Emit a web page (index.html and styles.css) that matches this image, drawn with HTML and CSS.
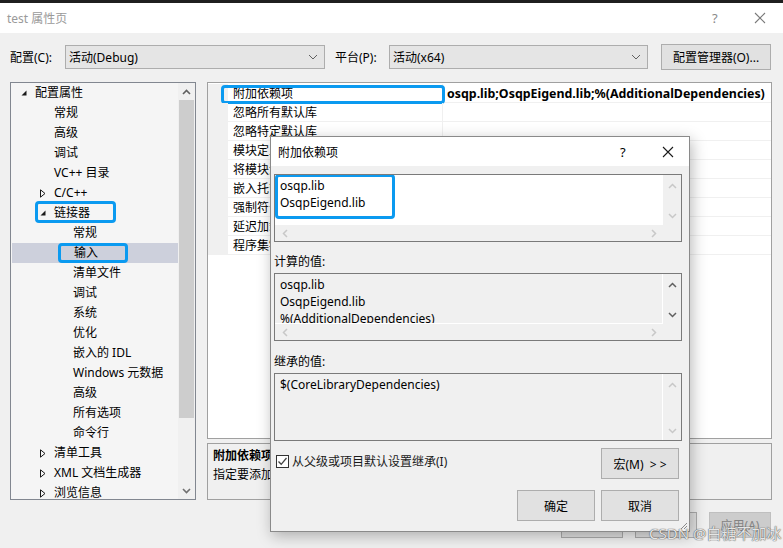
FILE: index.html
```html
<!DOCTYPE html>
<html lang="zh-CN">
  <head>
    <meta charset="UTF-8" />
    <meta name="viewport" content="width=device-width, initial-scale=1.0" />
    <title>test 属性页</title>
    <link rel="stylesheet" href="styles.css">
  </head>
  <body>
    <div class="top-strip"></div>
    <div class="titlebar">
      <span class="title">test 属性页</span>
      <span class="title-help">?</span>
      <span class="title-close">
        <svg width="12" height="12" viewBox="0 0 12 12"><path d="M1 1L11 11M11 1L1 11" stroke="#7a7a7a" stroke-width="1.1" fill="none"/></svg>
      </span>
    </div>

    <div class="toolbar">
      <span class="tool-label">配置(C):</span>
      <div class="combo combo-config">
        <span>活动(Debug)</span>
        <svg width="10" height="6" viewBox="0 0 10 6"><path d="M1 1L5 5L9 1" stroke="#606060" fill="none"/></svg>
      </div>
      <span class="tool-label platform-label">平台(P):</span>
      <div class="combo combo-platform">
        <span>活动(x64)</span>
        <svg width="10" height="6" viewBox="0 0 10 6"><path d="M1 1L5 5L9 1" stroke="#606060" fill="none"/></svg>
      </div>
      <button class="btn btn-manager">配置管理器(O)...</button>
    </div>

    <div class="main">
      <div class="tree">
        <div class="tree-list">
          <div class="tree-row lv0"><span class="tri"><svg width="6" height="6" viewBox="0 0 6 6"><path d="M5.5 0.5V5.5H0.5Z" fill="#1a1a1a"/></svg></span>配置属性</div>
          <div class="tree-row lv1">常规</div>
          <div class="tree-row lv1">高级</div>
          <div class="tree-row lv1">调试</div>
          <div class="tree-row lv1">VC++ 目录</div>
          <div class="tree-row lv1t"><span class="tri"><svg width="6" height="9" viewBox="0 0 6 9"><path d="M0.5 0.8V8.2L5 4.5Z" stroke="#1a1a1a" fill="none"/></svg></span>C/C++</div>
          <div class="tree-row lv1t marked-linker"><span class="tri"><svg width="6" height="6" viewBox="0 0 6 6"><path d="M5.5 0.5V5.5H0.5Z" fill="#1a1a1a"/></svg></span>链接器</div>
          <div class="tree-row lv2">常规</div>
          <div class="tree-row lv2 selected marked-input">输入</div>
          <div class="tree-row lv2">清单文件</div>
          <div class="tree-row lv2">调试</div>
          <div class="tree-row lv2">系统</div>
          <div class="tree-row lv2">优化</div>
          <div class="tree-row lv2">嵌入的 IDL</div>
          <div class="tree-row lv2">Windows 元数据</div>
          <div class="tree-row lv2">高级</div>
          <div class="tree-row lv2">所有选项</div>
          <div class="tree-row lv2">命令行</div>
          <div class="tree-row lv1t"><span class="tri"><svg width="6" height="9" viewBox="0 0 6 9"><path d="M0.5 0.8V8.2L5 4.5Z" stroke="#1a1a1a" fill="none"/></svg></span>清单工具</div>
          <div class="tree-row lv1t"><span class="tri"><svg width="6" height="9" viewBox="0 0 6 9"><path d="M0.5 0.8V8.2L5 4.5Z" stroke="#1a1a1a" fill="none"/></svg></span>XML 文档生成器</div>
          <div class="tree-row lv1t"><span class="tri"><svg width="6" height="9" viewBox="0 0 6 9"><path d="M0.5 0.8V8.2L5 4.5Z" stroke="#1a1a1a" fill="none"/></svg></span>浏览信息</div>
        </div>
        <div class="tree-scroll">
          <div class="scroll-arrow">
            <svg width="9" height="6" viewBox="0 0 9 6"><path d="M1 5L4.5 1.5L8 5" stroke="#606060" stroke-width="1.6" fill="none"/></svg>
          </div>
          <div class="scroll-thumb"></div>
          <div class="scroll-track"></div>
          <div class="scroll-arrow">
            <svg width="9" height="6" viewBox="0 0 9 6"><path d="M1 1L4.5 4.5L8 1" stroke="#707070" stroke-width="1.6" fill="none"/></svg>
          </div>
        </div>
      </div>

      <div class="right">
        <div class="grid">
          <div class="grid-row marked-prop">
            <span class="grid-gutter"></span>
            <span class="grid-name">附加依赖项</span>
            <span class="grid-value bold">osqp.lib;OsqpEigend.lib;%(AdditionalDependencies)</span>
          </div>
          <div class="grid-row"><span class="grid-gutter"></span><span class="grid-name">忽略所有默认库</span><span class="grid-value"></span></div>
          <div class="grid-row"><span class="grid-gutter"></span><span class="grid-name">忽略特定默认库</span><span class="grid-value"></span></div>
          <div class="grid-row"><span class="grid-gutter"></span><span class="grid-name">模块定义文件</span><span class="grid-value"></span></div>
          <div class="grid-row"><span class="grid-gutter"></span><span class="grid-name">将模块添加到程序集</span><span class="grid-value"></span></div>
          <div class="grid-row"><span class="grid-gutter"></span><span class="grid-name">嵌入托管资源文件</span><span class="grid-value"></span></div>
          <div class="grid-row"><span class="grid-gutter"></span><span class="grid-name">强制符号引用</span><span class="grid-value"></span></div>
          <div class="grid-row"><span class="grid-gutter"></span><span class="grid-name">延迟加载的 DLL</span><span class="grid-value"></span></div>
          <div class="grid-row"><span class="grid-gutter"></span><span class="grid-name">程序集链接资源</span><span class="grid-value"></span></div>
        </div>
        <div class="desc">
          <div class="desc-title">附加依赖项</div>
          <div class="desc-text">指定要添加到链接命令行的附加项。[例如 kernel32.lib]</div>
        </div>
      </div>
    </div>

    <div class="footer">
      <button class="btn btn-foot">确定</button>
      <button class="btn btn-foot">取消</button>
      <button class="btn btn-foot disabled">应用(A)</button>
    </div>

    <!-- popup dialog over the property page -->
    <div class="dialog">
      <div class="dialog-title">
        <span class="title-text">附加依赖项</span>
        <span class="dialog-help">?</span>
        <span class="dialog-close">
          <svg width="12" height="12" viewBox="0 0 12 12"><path d="M1 1L11 11M11 1L1 11" stroke="#1a1a1a" stroke-width="1.1" fill="none"/></svg>
        </span>
      </div>
      <div class="dialog-body">
        <div class="edit edit-main">
          <div class="edit-text marked-text">
            <div>osqp.lib</div>
            <div>OsqpEigend.lib</div>
          </div>
          <div class="vscroll">
            <svg width="9" height="6" viewBox="0 0 9 6"><path d="M1 5L4.5 1.5L8 5" stroke="#c8c8c8" stroke-width="1.5" fill="none"/></svg>
            <svg width="9" height="6" viewBox="0 0 9 6"><path d="M1 1L4.5 4.5L8 1" stroke="#c8c8c8" stroke-width="1.5" fill="none"/></svg>
          </div>
          <div class="hscroll">
            <svg width="6" height="9" viewBox="0 0 6 9"><path d="M5 1L1.5 4.5L5 8" stroke="#c8c8c8" stroke-width="1.5" fill="none"/></svg>
            <svg width="6" height="9" viewBox="0 0 6 9"><path d="M1 1L4.5 4.5L1 8" stroke="#c8c8c8" stroke-width="1.5" fill="none"/></svg>
          </div>
          <div class="corner"></div>
        </div>

        <div class="field-label">计算的值:</div>
        <div class="edit edit-readonly">
          <div class="edit-text ro">
            <div>osqp.lib</div>
            <div>OsqpEigend.lib</div>
            <div>%(AdditionalDependencies)</div>
          </div>
          <div class="vscroll">
            <svg width="9" height="6" viewBox="0 0 9 6"><path d="M1 5L4.5 1.5L8 5" stroke="#606060" stroke-width="1.5" fill="none"/></svg>
            <svg width="9" height="6" viewBox="0 0 9 6"><path d="M1 1L4.5 4.5L8 1" stroke="#606060" stroke-width="1.5" fill="none"/></svg>
          </div>
          <div class="hscroll">
            <svg width="6" height="9" viewBox="0 0 6 9"><path d="M5 1L1.5 4.5L5 8" stroke="#c8c8c8" stroke-width="1.5" fill="none"/></svg>
            <svg width="6" height="9" viewBox="0 0 6 9"><path d="M1 1L4.5 4.5L1 8" stroke="#c8c8c8" stroke-width="1.5" fill="none"/></svg>
          </div>
          <div class="corner"></div>
        </div>

        <div class="field-label label-2">继承的值:</div>
        <div class="edit edit-inherit">
          <div class="edit-text ro">
            <div>$(CoreLibraryDependencies)</div>
          </div>
          <div class="vscroll">
            <svg width="9" height="6" viewBox="0 0 9 6"><path d="M1 5L4.5 1.5L8 5" stroke="#c8c8c8" stroke-width="1.5" fill="none"/></svg>
            <svg width="9" height="6" viewBox="0 0 9 6"><path d="M1 1L4.5 4.5L8 1" stroke="#c8c8c8" stroke-width="1.5" fill="none"/></svg>
          </div>
        </div>

        <div class="inherit-row">
          <label class="check">
            <span class="check-box">
              <svg width="11" height="11" viewBox="0 0 11 11"><path d="M1.5 5.5L4.2 8.3L9.5 2" stroke="#444" stroke-width="1.3" fill="none"/></svg>
            </span>
            从父级或项目默认设置继承(I)
          </label>
          <button class="btn btn-dlg">宏(M)&nbsp; &gt; &gt;</button>
        </div>

        <div class="dialog-buttons">
          <button class="btn btn-dlg">确定</button>
          <button class="btn btn-dlg">取消</button>
        </div>
      </div>
      <svg class="grip" width="8" height="8" viewBox="0 0 8 8"><path d="M7 1L1 7M7 4L4 7" stroke="#8a8a8a" fill="none"/></svg>
    </div>

    <div class="watermark">CSDN @白糖不加冰</div>
  </body>
</html>
```

FILE: styles.css
```css
*,
*::before,
*::after {
  box-sizing: border-box;
}

body {
  margin: 0;
  width: 783px;
  height: 548px;
  overflow: hidden;
  position: relative;
  background: #f0f0f0;
  font-family: "Noto Sans", "Noto Sans CJK SC", sans-serif;
  font-size: 12px;
  color: #000;
}

.top-strip {
  height: 3px;
  background: #1f1f1f;
}

.titlebar {
  height: 30px;
  background: #fff;
  display: flex;
  align-items: center;
  padding-left: 7px;
  color: #9a9a9a;
}

.title {
  flex: 1;
  font-size: 12px;
}

.title-help {
  width: 16px;
  color: #8a8a8a;
  font-size: 13px;
  margin-right: 26px;
}

.title-close {
  width: 22px;
  margin-right: 7px;
  display: flex;
}

.toolbar {
  display: flex;
  align-items: center;
  height: 26px;
  margin: 11px 0 12px;
  padding-left: 10px;
}

.tool-label {
  width: 55px;
}

.platform-label {
  width: 54px;
  margin-left: 10px;
}

.combo {
  height: 24px;
  background: #e5e5e5;
  border: 1px solid #adadad;
  display: flex;
  align-items: center;
  justify-content: space-between;
  padding: 0 6px 0 3px;
}

.combo-config {
  width: 260px;
}

.combo-platform {
  width: 259px;
}

.btn {
  font-family: "Noto Sans", "Noto Sans CJK SC", sans-serif;
  font-size: 12px;
  background: #e1e1e1;
  border: 1px solid #adadad;
  color: #000;
  padding: 0;
}

.btn-manager {
  width: 110px;
  height: 26px;
  margin-left: 13px;
}

.main {
  display: flex;
  gap: 11px;
  padding-left: 10px;
  height: 418px;
}

/* left tree */
.tree {
  width: 186px;
  border: 1px solid #828790;
  background: #f5f5f5;
  display: flex;
}

.tree-list {
  flex: 1;
}

.tree-row {
  height: 20px;
  line-height: 20px;
  display: flex;
  align-items: center;
  position: relative;
  white-space: nowrap;
}

.tri {
  width: 14px;
  display: flex;
  align-items: center;
}

.lv0 {
  padding-left: 10px;
}

.lv1 {
  padding-left: 43px;
}

.lv1t {
  padding-left: 29px;
}

.lv2 {
  padding-left: 62px;
}

.selected {
  background: #cdd0dc;
  margin-left: 1px;
}

.marked-linker::after,
.marked-input::after,
.marked-prop::after,
.marked-text::after {
  content: "";
  position: absolute;
  border: 3px solid #0b9af0;
  border-radius: 4px;
}

.marked-linker::after {
  left: 24px;
  top: -2px;
  width: 81px;
  height: 22px;
}

.marked-input::after {
  left: 46px;
  top: 0;
  width: 70px;
  height: 20px;
}

.tree-scroll {
  width: 17px;
  display: flex;
  flex-direction: column;
  background: #f0f0f0;
}

.scroll-arrow {
  height: 17px;
  display: flex;
  align-items: center;
  justify-content: center;
}

.scroll-thumb {
  height: 318px;
  margin: 0 1px;
  background: #cdcdcd;
}

.scroll-track {
  flex: 1;
}

/* right side */
.right {
  width: 565px;
  display: flex;
  flex-direction: column;
  gap: 4px;
}

.grid {
  height: 357px;
  border: 1px solid #a0a0a0;
  background: #fff;
  padding-top: 1px;
}

.grid-row {
  height: 19px;
  display: flex;
  position: relative;
  border-bottom: 1px solid #f0f0f0;
}

.grid-gutter {
  width: 20px;
  background: #f0f0f0;
}

.grid-name {
  width: 215px;
  padding-left: 5px;
  line-height: 19px;
  border-right: 1px solid #f0f0f0;
  white-space: nowrap;
}

.grid-value {
  flex: 1;
  padding-left: 4px;
  line-height: 19px;
  white-space: nowrap;
}

.bold {
  font-weight: bold;
  font-size: 12.4px;
}

.marked-prop::after {
  left: 13px;
  top: 1px;
  width: 224px;
  height: 19px;
}

.desc {
  height: 57px;
  border: 1px solid #a0a0a0;
  padding: 2px 5px;
  line-height: 19px;
}

.desc-title {
  font-weight: bold;
}

.footer {
  display: flex;
  justify-content: flex-end;
  gap: 12px;
  padding-right: 12px;
  margin-top: 12px;
}

.btn-foot {
  width: 62px;
  height: 26px;
}

.btn-foot.disabled {
  background: #cccccc;
  border-color: #bfbfbf;
  color: #838383;
}

/* popup dialog */
.dialog {
  position: absolute;
  left: 270px;
  top: 136px;
  width: 420px;
  height: 396px;
  border: 1px solid #8a8a8a;
  background: #f0f0f0;
  box-shadow: 2px 4px 14px rgba(0, 0, 0, 0.28);
  z-index: 2;
}

.dialog-title {
  height: 29px;
  background: #fff;
  display: flex;
  align-items: center;
  padding-left: 7px;
}

.title-text {
  flex: 1;
}

.dialog-help {
  width: 14px;
  font-size: 13px;
  margin-right: 28px;
}

.dialog-close {
  width: 22px;
  margin-right: 5px;
  display: flex;
}

.dialog-body {
  padding: 8px 7px 0 3px;
}

.edit {
  height: 68px;
  border: 1px solid #7a7a7a;
  display: grid;
  grid-template-columns: 1fr 18px;
  grid-template-rows: 1fr 16px;
}

.edit-inherit {
  grid-template-rows: 1fr;
}

.edit-text {
  padding: 2px 0 0 5px;
  line-height: 17px;
  overflow: hidden;
  position: relative;
}

.edit-main .edit-text {
  background: #fff;
}

.edit-text.ro {
  border-right: 1px solid #fff;
  border-bottom: 1px solid #fff;
}

.edit-inherit .edit-text.ro {
  border-bottom: 0;
}

.marked-text::after {
  left: 0;
  top: -1px;
  width: 120px;
  height: 45px;
}

.vscroll {
  display: flex;
  flex-direction: column;
  align-items: center;
  justify-content: space-between;
  padding: 8px 0 6px;
}

.hscroll {
  display: flex;
  align-items: center;
  justify-content: space-between;
  padding: 0 6px 0 7px;
}

.field-label {
  height: 16px;
  line-height: 16px;
  margin: 12px 0 3px;
}

.label-2 {
  margin-top: 13px;
}

.inherit-row {
  display: flex;
  justify-content: space-between;
  align-items: flex-start;
  margin-top: 7px;
  padding-right: 3px;
}

.check {
  display: flex;
  align-items: center;
  gap: 3px;
  margin: 4px 0 0 2px;
  color: #1a1a1a;
}

.check-box {
  width: 13px;
  height: 13px;
  border: 1px solid #333;
  background: #fff;
  display: flex;
  align-items: center;
  justify-content: center;
}

.btn-dlg {
  width: 78px;
  height: 31px;
}

.dialog-buttons {
  display: flex;
  justify-content: flex-end;
  gap: 6px;
  margin-top: 11px;
  padding-right: 3px;
}

.grip {
  position: absolute;
  right: 1px;
  bottom: 1px;
}

.watermark {
  position: absolute;
  left: 649px;
  top: 523px;
  font-size: 15px;
  line-height: 20px;
  color: rgba(255, 255, 255, 0.85);
  text-shadow: 0 0 1px #555, 0 0 1px #555;
  z-index: 3;
  white-space: nowrap;
}
```
